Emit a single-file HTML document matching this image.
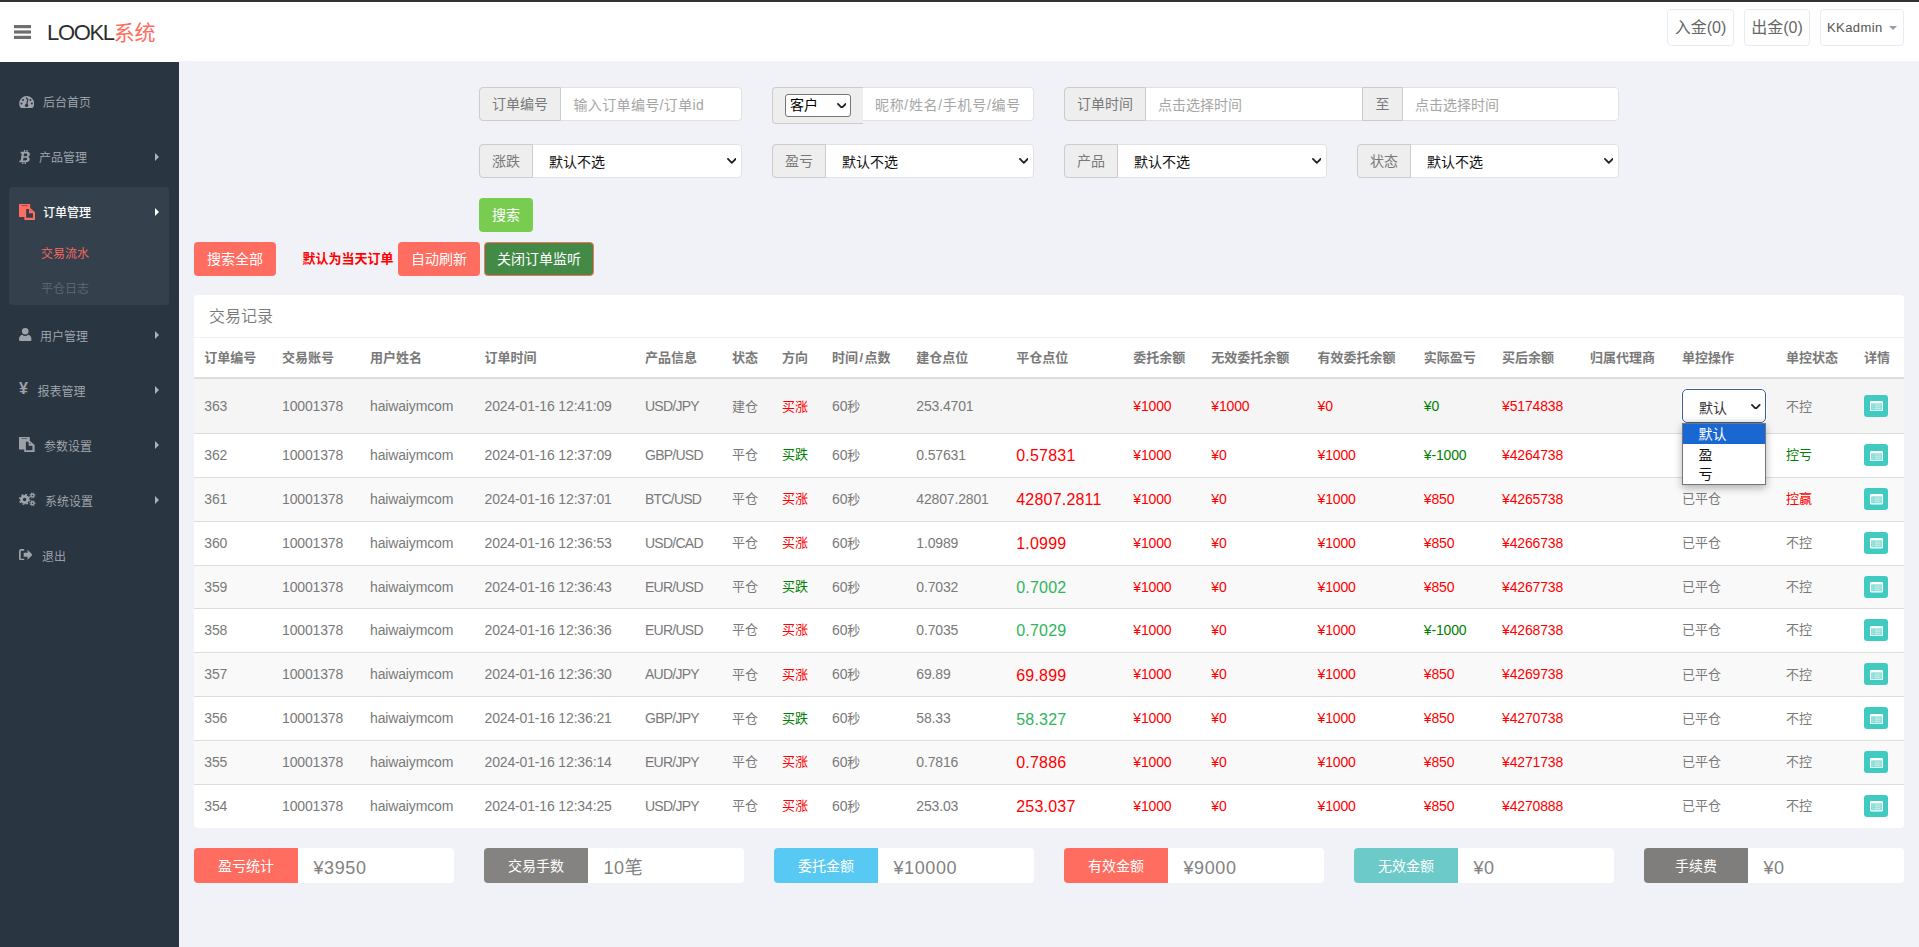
<!DOCTYPE html>
<html lang="zh-CN">
<head>
<meta charset="utf-8">
<title>LOOKL系统</title>
<style>
*{box-sizing:border-box;}
html,body{margin:0;padding:0;}
body{width:1919px;height:947px;overflow:hidden;position:relative;background:#f1f2f7;color:#797979;
 font-family:"Liberation Sans","Noto Sans CJK SC",sans-serif;font-size:13px;line-height:1.42857;}
.abs{position:absolute;}
/* header */
#topline{position:absolute;left:0;top:0;width:1919px;height:2px;background:#333;}
#header{position:absolute;left:0;top:2px;width:1919px;height:59px;background:#fff;}
#burger{position:absolute;left:14px;top:23.3px;width:17px;height:14px;}
#logo{position:absolute;left:47px;top:15.6px;font-size:22px;line-height:30px;color:#2e2e2e;white-space:nowrap;letter-spacing:-1.35px;}
#logo span{color:#ff6c60;letter-spacing:0;font-size:21px;}
.tbtn{position:absolute;top:9px;height:37px;border:1px solid #eaeaf4;border-radius:4px;background:#fff;color:#666;
 white-space:nowrap;text-align:center;}
/* sidebar */
#sidebar{position:absolute;left:0;top:61px;width:179px;height:886px;background:#2a3542;}
.nav{position:absolute;left:0;width:179px;height:20px;line-height:20px;font-size:12px;color:#a6abb1;font-weight:350;white-space:nowrap;}
.nav svg{position:absolute;}
.nav .t{position:absolute;top:1.1px;}
.nav .ar{position:absolute;left:155px;top:5.6px;width:0;height:0;border-left:4px solid #aeb2b7;border-top:4px solid transparent;border-bottom:4px solid transparent;}
#actblk{position:absolute;left:9px;top:126px;width:160px;height:118px;background:#35404d;border-radius:4px;}
/* form */
.ig{position:absolute;height:34px;border:1px solid #e2e2e4;border-radius:4px;background:#fff;}
.ig .ad{position:absolute;top:-1px;bottom:-1px;left:-1px;background:#eee;border:1px solid #ccc;border-radius:4px 0 0 4px;
 color:#797979;font-size:14px;line-height:32px;text-align:center;}
.ph{position:absolute;top:1.3px;line-height:33px;font-size:14px;color:#a6a6a6;white-space:nowrap;}
.sv{position:absolute;top:1px;line-height:33px;font-size:14px;color:#111;white-space:nowrap;}
.chev{position:absolute;width:9.6px;height:5.8px;}
.btn{position:absolute;height:34px;border-radius:4px;color:#fff;font-size:14px;line-height:34px;text-align:center;white-space:nowrap;}

/* table */
#panel{position:absolute;left:194px;top:295px;width:1710px;height:533px;background:#fff;border-radius:4px;}
#ptitle{position:absolute;left:15px;top:11.4px;font-size:16px;line-height:22.86px;color:#797979;font-weight:350;}
#phl{position:absolute;left:0;top:42px;width:1710px;height:1px;background:#eff2f7;}
.th{position:absolute;top:53.6px;height:18.6px;line-height:18.6px;font-weight:bold;color:#797979;white-space:nowrap;font-size:13px;}
#thl{position:absolute;left:0;top:81.6px;width:1710px;height:2px;background:#ddd;}
.row{position:absolute;left:0;width:1710px;border-top:1px solid #ddd;}
.row.odd{background:#f9f9f9;}
.row.hov{background:#f5f5f5;border-top:0;}
.c{position:absolute;top:10.7px;height:22.857px;line-height:22.857px;white-space:nowrap;font-size:14px;letter-spacing:-0.15px;}
.c .k,.c.k{font-size:13px;letter-spacing:0;}
.big{font-size:16px;letter-spacing:0.2px;}
.r{color:#f00;} .g{color:#008000;} .bg{color:#2db55d;} .br{color:#f00;}
.dbtn{position:absolute;left:1670px;width:24px;height:22px;border-radius:3px;background:#41cac0;}
.dbtn svg{position:absolute;left:5.5px;top:6.5px;}
.stat{position:absolute;top:848px;width:260px;height:35px;background:#fff;border-radius:4px;overflow:hidden;}
.stat .l{position:absolute;left:0;top:0;width:104px;height:35px;line-height:37px;color:#fff;font-size:14px;text-align:center;}
.stat .v{position:absolute;left:119.5px;top:0;line-height:40px;font-size:18px;color:#828282;white-space:nowrap;letter-spacing:0.6px;}
</style>
</head>
<body>
<div id="topline"></div>
<div id="header">
  <svg id="burger" viewBox="0 0 17 14"><rect x="0" y="0" width="17" height="3.2" fill="#6e6e6e"/><rect x="0" y="5.4" width="17" height="3.2" fill="#6e6e6e"/><rect x="0" y="10.8" width="17" height="3.2" fill="#6e6e6e"/></svg>
  <div id="logo">LOOKL<span>系统</span></div>
  <div class="tbtn" style="left:1667px;width:67px;top:7px;font-size:16px;line-height:35px;">入金(0)</div>
  <div class="tbtn" style="left:1744px;width:66px;top:7px;font-size:16px;line-height:35px;">出金(0)</div>
  <div class="tbtn" style="left:1820px;width:84px;top:7px;font-size:13px;line-height:35px;text-align:left;padding-left:6px;color:#555;letter-spacing:0.4px;">KKadmin<span style="position:absolute;left:68px;top:16px;width:0;height:0;border-top:4px solid #9a9aa8;border-left:4px solid transparent;border-right:4px solid transparent;"></span></div>
</div>

<div class="abs" style="left:0;top:61px;width:179px;height:1px;background:#fff;z-index:3;"></div>
<div id="sidebar">
  <div id="actblk"></div>

  <div class="nav" style="top:31px;">
    <svg style="left:19px;top:4px;" width="15.4" height="12" viewBox="0 0 15 12"><path d="M7.5,0 A7.5,7.5 0 0 1 15,7.5 C15,9 14.6,10.4 13.8,11.6 C13.7,11.85 13.4,12 13.1,12 L1.9,12 C1.6,12 1.3,11.85 1.2,11.6 C0.4,10.4 0,9 0,7.5 A7.5,7.5 0 0 1 7.5,0 Z" fill="#9ea3aa"/><g fill="#2a3542"><circle cx="2.3" cy="7.6" r="1"/><circle cx="3.8" cy="3.9" r="1"/><circle cx="11.2" cy="3.9" r="1"/><circle cx="12.7" cy="7.6" r="1"/><circle cx="7.4" cy="9.4" r="1.7"/><path d="M7.6,8.6 L8.6,3.2" stroke="#2a3542" stroke-width="1.2" stroke-linecap="round"/><circle cx="7.5" cy="2.3" r="0.9"/></g></svg>
    <span class="t" style="left:43px;">后台首页</span>
  </div>
  <div class="nav" style="top:86px;">
    <svg style="left:20px;top:3px;overflow:visible;" width="10" height="14" viewBox="0 0 10 14"><path transform="translate(1.0,0) skewX(-8)" fill="#9ea3aa" fill-rule="evenodd" d="M3,0 H4.3 V2 H3Z M5.5,0 H6.8 V2 H5.5Z M3,12 H4.3 V14 H3Z M5.5,12 H6.8 V14 H5.5Z M0,1.8 H6 C8.5,1.8 9.5,3.2 9.5,4.6 C9.5,5.8 8.9,6.5 8,6.9 C9.3,7.2 10,8.2 10,9.4 C10,11.2 8.6,12.2 6.3,12.2 H0 V10.6 H1.3 V3.4 H0 Z M3.5,3.6 V6.2 H5.4 C6.5,6.2 7.1,5.7 7.1,4.9 C7.1,4.1 6.5,3.6 5.4,3.6 Z M3.5,7.8 V10.4 H5.7 C6.9,10.4 7.5,9.9 7.5,9.1 C7.5,8.3 6.9,7.8 5.7,7.8 Z"/></svg>
    <span class="t" style="left:39px;">产品管理</span><i class="ar"></i>
  </div>
  <div class="nav" style="top:141px;color:#fff;">
    <svg style="left:19px;top:2px;" width="16.2" height="16" viewBox="0 0 16.2 16"><path fill="#ff6c60" fill-rule="evenodd" d="M0.5,0 H10.7 Q11.2,0 11.2,0.5 V3.9 L16.2,8.3 V15.4 Q16.2,16 15.6,16 H6 Q5.4,16 5.4,15.4 V13 H0.5 Q0,13 0,12.5 V0.5 Q0,0 0.5,0Z M7.15,5 H10 V9.2 H14 V13.75 H7.15Z"/><path d="M2.6,1.6 H8.6" stroke="#35404d" stroke-width="0.8" stroke-opacity="0.75"/><circle cx="11.6" cy="6.8" r="0.45" fill="#35404d"/></svg>
    <span class="t" style="left:43px;font-weight:500;">订单管理</span><i class="ar" style="border-left-color:#fff;"></i>
  </div>
  <div class="nav" style="top:181.5px;color:#ff6c60;"><span class="t" style="left:41px;">交易流水</span></div>
  <div class="nav" style="top:216.5px;color:#5f6b78;"><span class="t" style="left:41px;">平仓日志</span></div>
  <div class="nav" style="top:264.5px;">
    <svg style="left:19px;top:2px;" width="12.5" height="13" viewBox="0 0 12.5 13"><circle cx="6.25" cy="3.3" r="3.3" fill="#9ea3aa"/><path d="M0,11.5 C0,9 1.3,7 3.3,6.8 C4.1,7.6 5.2,8 6.25,8 C7.3,8 8.4,7.6 9.2,6.8 C11.2,7 12.5,9 12.5,11.5 C12.5,12.5 11.8,13 11,13 H1.5 C0.7,13 0,12.5 0,11.5Z" fill="#9ea3aa"/></svg>
    <span class="t" style="left:40px;">用户管理</span><i class="ar"></i>
  </div>
  <div class="nav" style="top:319.5px;">
    <span class="t" style="left:19px;top:-1.5px;font-size:16px;font-weight:bold;color:#9ea3aa;">¥</span>
    <span class="t" style="left:37.5px;">报表管理</span><i class="ar"></i>
  </div>
  <div class="nav" style="top:374.5px;">
    <svg style="left:19px;top:1.2px;" width="15.6" height="15.4" viewBox="0 0 16.2 16"><path fill="#9ea3aa" fill-rule="evenodd" d="M0.5,0 H10.7 Q11.2,0 11.2,0.5 V3.9 L16.2,8.3 V15.4 Q16.2,16 15.6,16 H6 Q5.4,16 5.4,15.4 V13 H0.5 Q0,13 0,12.5 V0.5 Q0,0 0.5,0Z M7.15,5 H10 V9.2 H14 V13.75 H7.15Z"/><path d="M2.6,1.6 H8.6" stroke="#2a3542" stroke-width="0.8" stroke-opacity="0.75"/><circle cx="11.6" cy="6.8" r="0.45" fill="#2a3542"/></svg>
    <span class="t" style="left:44px;">参数设置</span><i class="ar"></i>
  </div>
  <div class="nav" style="top:429.5px;">
    <svg style="left:19px;top:1.5px;" width="16.6" height="14.5" viewBox="0 0 16 14"><g fill="none" stroke="#9ea3aa"><circle cx="5.4" cy="7.2" r="3.0" stroke-width="2.6"/><circle cx="5.4" cy="7.2" r="4.7" stroke-width="1.5" stroke-dasharray="1.85 1.841"/><circle cx="13" cy="3.3" r="1.4" stroke-width="1.3"/><circle cx="13" cy="3.3" r="2.4" stroke-width="1" stroke-dasharray="0.95 0.935"/><circle cx="13" cy="10.8" r="1.4" stroke-width="1.3"/><circle cx="13" cy="10.8" r="2.4" stroke-width="1" stroke-dasharray="0.95 0.935"/></g></svg>
    <span class="t" style="left:45px;">系统设置</span><i class="ar"></i>
  </div>
  <div class="nav" style="top:484.5px;">
    <svg style="left:18.8px;top:3px;" width="13.6" height="11.5" viewBox="0 0 13 11"><path fill="#9ea3aa" d="M5,0 H2.2 Q0,0 0,2.2 V8.8 Q0,11 2.2,11 H5 V9.4 H2.4 Q1.6,9.4 1.6,8.6 V2.4 Q1.6,1.6 2.4,1.6 H5Z M4.5,3.6 H8.2 V0.8 L13,5.5 L8.2,10.2 V7.4 H4.5Z"/></svg>
    <span class="t" style="left:42px;">退出</span>
  </div>

</div>

<div class="ig" style="left:479px;top:87px;width:263px;"><div class="ad" style="width:82px;">订单编号</div><span class="ph" style="left:93.5px;letter-spacing:0.35px;">输入订单编号/订单id</span></div>
<div class="ig" style="left:863px;top:87px;width:171px;border-radius:0 4px 4px 0;border-left:0;"><span class="ph" style="left:12px;letter-spacing:0.68px;">昵称/姓名/手机号/编号</span></div>
<div class="abs" style="left:772px;top:87px;width:91px;height:37px;background:#eee;border:1px solid #ccc;border-right:0;border-radius:4px 0 0 4px;"><div class="abs" style="left:12px;top:6px;width:66px;height:23px;background:#fff;border:1px solid #767676;border-radius:3px;"><span class="abs" style="left:4px;top:0;line-height:21px;font-size:14px;color:#000;">客户</span><svg class="chev" style="left:50.5px;top:7.5px" viewBox="0 0 10 6"><path d="M1,1 L5,5 L9,1" fill="none" stroke="#222" stroke-width="1.9" stroke-linecap="round" stroke-linejoin="round"/></svg></div></div>
<div class="ig" style="left:1064px;top:87px;width:555px;"><div class="ad" style="width:82px;">订单时间</div><span class="ph" style="left:93px;">点击选择时间</span><div class="ad" style="left:297px;width:41px;border-radius:0;">至</div><span class="ph" style="left:350px;">点击选择时间</span></div>
<div class="ig" style="left:479px;top:144px;width:263px;"><div class="ad" style="width:54px;">涨跌</div><span class="sv" style="left:69px;">默认不选</span><svg class="chev" style="left:246.5px;top:13px" viewBox="0 0 10 6"><path d="M1,1 L5,5 L9,1" fill="none" stroke="#222" stroke-width="1.9" stroke-linecap="round" stroke-linejoin="round"/></svg></div>
<div class="ig" style="left:772px;top:144px;width:262px;"><div class="ad" style="width:54px;">盈亏</div><span class="sv" style="left:69px;">默认不选</span><svg class="chev" style="left:245.5px;top:13px" viewBox="0 0 10 6"><path d="M1,1 L5,5 L9,1" fill="none" stroke="#222" stroke-width="1.9" stroke-linecap="round" stroke-linejoin="round"/></svg></div>
<div class="ig" style="left:1064px;top:144px;width:263px;"><div class="ad" style="width:54px;">产品</div><span class="sv" style="left:69px;">默认不选</span><svg class="chev" style="left:246.5px;top:13px" viewBox="0 0 10 6"><path d="M1,1 L5,5 L9,1" fill="none" stroke="#222" stroke-width="1.9" stroke-linecap="round" stroke-linejoin="round"/></svg></div>
<div class="ig" style="left:1357px;top:144px;width:262px;"><div class="ad" style="width:54px;">状态</div><span class="sv" style="left:69px;">默认不选</span><svg class="chev" style="left:245.5px;top:13px" viewBox="0 0 10 6"><path d="M1,1 L5,5 L9,1" fill="none" stroke="#222" stroke-width="1.9" stroke-linecap="round" stroke-linejoin="round"/></svg></div>
<div class="btn" style="left:479px;top:198px;width:54px;background:#78cd51;">搜索</div>
<div class="btn" style="left:194px;top:242px;width:82px;background:#ff6c60;">搜索全部</div>
<div class="abs" style="left:302.5px;top:249px;line-height:20px;font-size:13px;font-weight:bold;color:#f00;white-space:nowrap;">默认为当天订单</div>
<div class="btn" style="left:398px;top:242px;width:82px;background:#ff6c60;">自动刷新</div>
<div class="btn" style="left:484px;top:242px;width:110px;background:#448a47;border:1px solid #ff6c60;line-height:32px;">关闭订单监听</div>


<div id="panel"><div id="ptitle">交易记录</div><div id="phl"></div>
<span class="th" style="left:10.25px;">订单编号</span><span class="th" style="left:88px;">交易账号</span><span class="th" style="left:176px;">用户姓名</span><span class="th" style="left:290.5px;">订单时间</span><span class="th" style="left:451px;">产品信息</span><span class="th" style="left:538px;">状态</span><span class="th" style="left:588px;">方向</span><span class="th" style="left:638px;">时间<span style="padding:0 1.4px;">/</span>点数</span><span class="th" style="left:722.25px;">建仓点位</span><span class="th" style="left:822.25px;">平仓点位</span><span class="th" style="left:939.25px;">委托余额</span><span class="th" style="left:1017.25px;">无效委托余额</span><span class="th" style="left:1123.5px;">有效委托余额</span><span class="th" style="left:1229.75px;">实际盈亏</span><span class="th" style="left:1308px;">买后余额</span><span class="th" style="left:1396px;">归属代理商</span><span class="th" style="left:1488px;">单控操作</span><span class="th" style="left:1592px;">单控状态</span><span class="th" style="left:1670px;">详情</span>
<div id="thl"></div>
<div class="row hov" style="top:83.6px;height:54px;"><span class="c " style="left:10.25px;top:16.8px;">363</span><span class="c " style="left:88px;top:16.8px;">10001378</span><span class="c " style="left:176px;top:16.8px;">haiwaiymcom</span><span class="c " style="left:290.5px;top:16.8px;">2024-01-16 12:41:09</span><span class="c " style="left:451px;top:16.8px;letter-spacing:-0.75px;">USD/JPY</span><span class="c k" style="left:538px;top:17.1px;">建仓</span><span class="c r k" style="left:588px;top:17.1px;">买涨</span><span class="c " style="left:638px;top:16.8px;">60<span class="k">秒</span></span><span class="c " style="left:722.25px;top:16.8px;">253.4701</span><span class="c r" style="left:939.25px;top:16.8px;">¥1000</span><span class="c r" style="left:1017.25px;top:16.8px;">¥1000</span><span class="c r" style="left:1123.5px;top:16.8px;">¥0</span><span class="c g" style="left:1229.75px;top:16.8px;">¥0</span><span class="c r" style="left:1308px;top:16.8px;">¥5174838</span><span class="c  k" style="left:1592px;top:17.1px;">不控</span><div class="dbtn" style="top:16px;"><svg width="13" height="10.4" viewBox="0 0 13 10.4"><rect x="0.6" y="0.6" width="11.8" height="9.2" rx="0.9" fill="rgba(255,255,255,0.28)" stroke="#fff" stroke-width="1.2"/><rect x="0.6" y="0.4" width="11.8" height="2" fill="#fff"/><path d="M2.2,4 H3.4 M4.4,4 H10.8 M2.2,5.9 H3.4 M4.4,5.9 H10.8 M2.2,7.8 H3.4 M4.4,7.8 H10.8" stroke="#fff" stroke-opacity="0.8" stroke-width="0.9"/></svg></div></div>
<div class="row" style="top:138.3px;height:43.857px;"><span class="c " style="left:10.25px;top:9.8px;">362</span><span class="c " style="left:88px;top:9.8px;">10001378</span><span class="c " style="left:176px;top:9.8px;">haiwaiymcom</span><span class="c " style="left:290.5px;top:9.8px;">2024-01-16 12:37:09</span><span class="c " style="left:451px;top:9.8px;letter-spacing:-0.75px;">GBP/USD</span><span class="c k" style="left:538px;top:10.1px;">平仓</span><span class="c g k" style="left:588px;top:10.1px;">买跌</span><span class="c " style="left:638px;top:9.8px;">60<span class="k">秒</span></span><span class="c " style="left:722.25px;top:9.8px;">0.57631</span><span class="c big br" style="left:822.25px;top:11.2px;">0.57831</span><span class="c r" style="left:939.25px;top:9.8px;">¥1000</span><span class="c r" style="left:1017.25px;top:9.8px;">¥0</span><span class="c r" style="left:1123.5px;top:9.8px;">¥1000</span><span class="c g" style="left:1229.75px;top:9.8px;">¥-1000</span><span class="c r" style="left:1308px;top:9.8px;">¥4264738</span><span class="c k" style="left:1488px;top:10.1px;">已平仓</span><span class="c g k" style="left:1592px;top:10.1px;">控亏</span><div class="dbtn" style="top:9.8285px;"><svg width="13" height="10.4" viewBox="0 0 13 10.4"><rect x="0.6" y="0.6" width="11.8" height="9.2" rx="0.9" fill="rgba(255,255,255,0.28)" stroke="#fff" stroke-width="1.2"/><rect x="0.6" y="0.4" width="11.8" height="2" fill="#fff"/><path d="M2.2,4 H3.4 M4.4,4 H10.8 M2.2,5.9 H3.4 M4.4,5.9 H10.8 M2.2,7.8 H3.4 M4.4,7.8 H10.8" stroke="#fff" stroke-opacity="0.8" stroke-width="0.9"/></svg></div></div>
<div class="row odd" style="top:182.157px;height:43.857px;"><span class="c " style="left:10.25px;top:9.8px;">361</span><span class="c " style="left:88px;top:9.8px;">10001378</span><span class="c " style="left:176px;top:9.8px;">haiwaiymcom</span><span class="c " style="left:290.5px;top:9.8px;">2024-01-16 12:37:01</span><span class="c " style="left:451px;top:9.8px;letter-spacing:-0.75px;">BTC/USD</span><span class="c k" style="left:538px;top:10.1px;">平仓</span><span class="c r k" style="left:588px;top:10.1px;">买涨</span><span class="c " style="left:638px;top:9.8px;">60<span class="k">秒</span></span><span class="c " style="left:722.25px;top:9.8px;">42807.2801</span><span class="c big br" style="left:822.25px;top:11.2px;">42807.2811</span><span class="c r" style="left:939.25px;top:9.8px;">¥1000</span><span class="c r" style="left:1017.25px;top:9.8px;">¥0</span><span class="c r" style="left:1123.5px;top:9.8px;">¥1000</span><span class="c r" style="left:1229.75px;top:9.8px;">¥850</span><span class="c r" style="left:1308px;top:9.8px;">¥4265738</span><span class="c k" style="left:1488px;top:10.1px;">已平仓</span><span class="c r k" style="left:1592px;top:10.1px;">控赢</span><div class="dbtn" style="top:9.8285px;"><svg width="13" height="10.4" viewBox="0 0 13 10.4"><rect x="0.6" y="0.6" width="11.8" height="9.2" rx="0.9" fill="rgba(255,255,255,0.28)" stroke="#fff" stroke-width="1.2"/><rect x="0.6" y="0.4" width="11.8" height="2" fill="#fff"/><path d="M2.2,4 H3.4 M4.4,4 H10.8 M2.2,5.9 H3.4 M4.4,5.9 H10.8 M2.2,7.8 H3.4 M4.4,7.8 H10.8" stroke="#fff" stroke-opacity="0.8" stroke-width="0.9"/></svg></div></div>
<div class="row" style="top:226.014px;height:43.857px;"><span class="c " style="left:10.25px;top:9.8px;">360</span><span class="c " style="left:88px;top:9.8px;">10001378</span><span class="c " style="left:176px;top:9.8px;">haiwaiymcom</span><span class="c " style="left:290.5px;top:9.8px;">2024-01-16 12:36:53</span><span class="c " style="left:451px;top:9.8px;letter-spacing:-0.75px;">USD/CAD</span><span class="c k" style="left:538px;top:10.1px;">平仓</span><span class="c r k" style="left:588px;top:10.1px;">买涨</span><span class="c " style="left:638px;top:9.8px;">60<span class="k">秒</span></span><span class="c " style="left:722.25px;top:9.8px;">1.0989</span><span class="c big br" style="left:822.25px;top:11.2px;">1.0999</span><span class="c r" style="left:939.25px;top:9.8px;">¥1000</span><span class="c r" style="left:1017.25px;top:9.8px;">¥0</span><span class="c r" style="left:1123.5px;top:9.8px;">¥1000</span><span class="c r" style="left:1229.75px;top:9.8px;">¥850</span><span class="c r" style="left:1308px;top:9.8px;">¥4266738</span><span class="c k" style="left:1488px;top:10.1px;">已平仓</span><span class="c  k" style="left:1592px;top:10.1px;">不控</span><div class="dbtn" style="top:9.8285px;"><svg width="13" height="10.4" viewBox="0 0 13 10.4"><rect x="0.6" y="0.6" width="11.8" height="9.2" rx="0.9" fill="rgba(255,255,255,0.28)" stroke="#fff" stroke-width="1.2"/><rect x="0.6" y="0.4" width="11.8" height="2" fill="#fff"/><path d="M2.2,4 H3.4 M4.4,4 H10.8 M2.2,5.9 H3.4 M4.4,5.9 H10.8 M2.2,7.8 H3.4 M4.4,7.8 H10.8" stroke="#fff" stroke-opacity="0.8" stroke-width="0.9"/></svg></div></div>
<div class="row odd" style="top:269.871px;height:43.857px;"><span class="c " style="left:10.25px;top:9.8px;">359</span><span class="c " style="left:88px;top:9.8px;">10001378</span><span class="c " style="left:176px;top:9.8px;">haiwaiymcom</span><span class="c " style="left:290.5px;top:9.8px;">2024-01-16 12:36:43</span><span class="c " style="left:451px;top:9.8px;letter-spacing:-0.75px;">EUR/USD</span><span class="c k" style="left:538px;top:10.1px;">平仓</span><span class="c g k" style="left:588px;top:10.1px;">买跌</span><span class="c " style="left:638px;top:9.8px;">60<span class="k">秒</span></span><span class="c " style="left:722.25px;top:9.8px;">0.7032</span><span class="c big bg" style="left:822.25px;top:11.2px;">0.7002</span><span class="c r" style="left:939.25px;top:9.8px;">¥1000</span><span class="c r" style="left:1017.25px;top:9.8px;">¥0</span><span class="c r" style="left:1123.5px;top:9.8px;">¥1000</span><span class="c r" style="left:1229.75px;top:9.8px;">¥850</span><span class="c r" style="left:1308px;top:9.8px;">¥4267738</span><span class="c k" style="left:1488px;top:10.1px;">已平仓</span><span class="c  k" style="left:1592px;top:10.1px;">不控</span><div class="dbtn" style="top:9.8285px;"><svg width="13" height="10.4" viewBox="0 0 13 10.4"><rect x="0.6" y="0.6" width="11.8" height="9.2" rx="0.9" fill="rgba(255,255,255,0.28)" stroke="#fff" stroke-width="1.2"/><rect x="0.6" y="0.4" width="11.8" height="2" fill="#fff"/><path d="M2.2,4 H3.4 M4.4,4 H10.8 M2.2,5.9 H3.4 M4.4,5.9 H10.8 M2.2,7.8 H3.4 M4.4,7.8 H10.8" stroke="#fff" stroke-opacity="0.8" stroke-width="0.9"/></svg></div></div>
<div class="row" style="top:313.128px;height:44.057px;"><span class="c " style="left:10.25px;top:9.4px;">358</span><span class="c " style="left:88px;top:9.4px;">10001378</span><span class="c " style="left:176px;top:9.4px;">haiwaiymcom</span><span class="c " style="left:290.5px;top:9.4px;">2024-01-16 12:36:36</span><span class="c " style="left:451px;top:9.4px;letter-spacing:-0.75px;">EUR/USD</span><span class="c k" style="left:538px;top:9.7px;">平仓</span><span class="c r k" style="left:588px;top:9.7px;">买涨</span><span class="c " style="left:638px;top:9.4px;">60<span class="k">秒</span></span><span class="c " style="left:722.25px;top:9.4px;">0.7035</span><span class="c big bg" style="left:822.25px;top:10.8px;">0.7029</span><span class="c r" style="left:939.25px;top:9.4px;">¥1000</span><span class="c r" style="left:1017.25px;top:9.4px;">¥0</span><span class="c r" style="left:1123.5px;top:9.4px;">¥1000</span><span class="c g" style="left:1229.75px;top:9.4px;">¥-1000</span><span class="c r" style="left:1308px;top:9.4px;">¥4268738</span><span class="c k" style="left:1488px;top:9.7px;">已平仓</span><span class="c  k" style="left:1592px;top:9.7px;">不控</span><div class="dbtn" style="top:9.9285px;"><svg width="13" height="10.4" viewBox="0 0 13 10.4"><rect x="0.6" y="0.6" width="11.8" height="9.2" rx="0.9" fill="rgba(255,255,255,0.28)" stroke="#fff" stroke-width="1.2"/><rect x="0.6" y="0.4" width="11.8" height="2" fill="#fff"/><path d="M2.2,4 H3.4 M4.4,4 H10.8 M2.2,5.9 H3.4 M4.4,5.9 H10.8 M2.2,7.8 H3.4 M4.4,7.8 H10.8" stroke="#fff" stroke-opacity="0.8" stroke-width="0.9"/></svg></div></div>
<div class="row odd" style="top:357.185px;height:44.257px;"><span class="c " style="left:10.25px;top:10.2px;">357</span><span class="c " style="left:88px;top:10.2px;">10001378</span><span class="c " style="left:176px;top:10.2px;">haiwaiymcom</span><span class="c " style="left:290.5px;top:10.2px;">2024-01-16 12:36:30</span><span class="c " style="left:451px;top:10.2px;letter-spacing:-0.75px;">AUD/JPY</span><span class="c k" style="left:538px;top:10.5px;">平仓</span><span class="c r k" style="left:588px;top:10.5px;">买涨</span><span class="c " style="left:638px;top:10.2px;">60<span class="k">秒</span></span><span class="c " style="left:722.25px;top:10.2px;">69.89</span><span class="c big br" style="left:822.25px;top:11.6px;">69.899</span><span class="c r" style="left:939.25px;top:10.2px;">¥1000</span><span class="c r" style="left:1017.25px;top:10.2px;">¥0</span><span class="c r" style="left:1123.5px;top:10.2px;">¥1000</span><span class="c r" style="left:1229.75px;top:10.2px;">¥850</span><span class="c r" style="left:1308px;top:10.2px;">¥4269738</span><span class="c k" style="left:1488px;top:10.5px;">已平仓</span><span class="c  k" style="left:1592px;top:10.5px;">不控</span><div class="dbtn" style="top:10.0285px;"><svg width="13" height="10.4" viewBox="0 0 13 10.4"><rect x="0.6" y="0.6" width="11.8" height="9.2" rx="0.9" fill="rgba(255,255,255,0.28)" stroke="#fff" stroke-width="1.2"/><rect x="0.6" y="0.4" width="11.8" height="2" fill="#fff"/><path d="M2.2,4 H3.4 M4.4,4 H10.8 M2.2,5.9 H3.4 M4.4,5.9 H10.8 M2.2,7.8 H3.4 M4.4,7.8 H10.8" stroke="#fff" stroke-opacity="0.8" stroke-width="0.9"/></svg></div></div>
<div class="row" style="top:401.442px;height:43.857px;"><span class="c " style="left:10.25px;top:9.8px;">356</span><span class="c " style="left:88px;top:9.8px;">10001378</span><span class="c " style="left:176px;top:9.8px;">haiwaiymcom</span><span class="c " style="left:290.5px;top:9.8px;">2024-01-16 12:36:21</span><span class="c " style="left:451px;top:9.8px;letter-spacing:-0.75px;">GBP/JPY</span><span class="c k" style="left:538px;top:10.1px;">平仓</span><span class="c g k" style="left:588px;top:10.1px;">买跌</span><span class="c " style="left:638px;top:9.8px;">60<span class="k">秒</span></span><span class="c " style="left:722.25px;top:9.8px;">58.33</span><span class="c big bg" style="left:822.25px;top:11.2px;">58.327</span><span class="c r" style="left:939.25px;top:9.8px;">¥1000</span><span class="c r" style="left:1017.25px;top:9.8px;">¥0</span><span class="c r" style="left:1123.5px;top:9.8px;">¥1000</span><span class="c r" style="left:1229.75px;top:9.8px;">¥850</span><span class="c r" style="left:1308px;top:9.8px;">¥4270738</span><span class="c k" style="left:1488px;top:10.1px;">已平仓</span><span class="c  k" style="left:1592px;top:10.1px;">不控</span><div class="dbtn" style="top:9.8285px;"><svg width="13" height="10.4" viewBox="0 0 13 10.4"><rect x="0.6" y="0.6" width="11.8" height="9.2" rx="0.9" fill="rgba(255,255,255,0.28)" stroke="#fff" stroke-width="1.2"/><rect x="0.6" y="0.4" width="11.8" height="2" fill="#fff"/><path d="M2.2,4 H3.4 M4.4,4 H10.8 M2.2,5.9 H3.4 M4.4,5.9 H10.8 M2.2,7.8 H3.4 M4.4,7.8 H10.8" stroke="#fff" stroke-opacity="0.8" stroke-width="0.9"/></svg></div></div>
<div class="row odd" style="top:445.299px;height:43.857px;"><span class="c " style="left:10.25px;top:9.8px;">355</span><span class="c " style="left:88px;top:9.8px;">10001378</span><span class="c " style="left:176px;top:9.8px;">haiwaiymcom</span><span class="c " style="left:290.5px;top:9.8px;">2024-01-16 12:36:14</span><span class="c " style="left:451px;top:9.8px;letter-spacing:-0.75px;">EUR/JPY</span><span class="c k" style="left:538px;top:10.1px;">平仓</span><span class="c r k" style="left:588px;top:10.1px;">买涨</span><span class="c " style="left:638px;top:9.8px;">60<span class="k">秒</span></span><span class="c " style="left:722.25px;top:9.8px;">0.7816</span><span class="c big br" style="left:822.25px;top:11.2px;">0.7886</span><span class="c r" style="left:939.25px;top:9.8px;">¥1000</span><span class="c r" style="left:1017.25px;top:9.8px;">¥0</span><span class="c r" style="left:1123.5px;top:9.8px;">¥1000</span><span class="c r" style="left:1229.75px;top:9.8px;">¥850</span><span class="c r" style="left:1308px;top:9.8px;">¥4271738</span><span class="c k" style="left:1488px;top:10.1px;">已平仓</span><span class="c  k" style="left:1592px;top:10.1px;">不控</span><div class="dbtn" style="top:9.8285px;"><svg width="13" height="10.4" viewBox="0 0 13 10.4"><rect x="0.6" y="0.6" width="11.8" height="9.2" rx="0.9" fill="rgba(255,255,255,0.28)" stroke="#fff" stroke-width="1.2"/><rect x="0.6" y="0.4" width="11.8" height="2" fill="#fff"/><path d="M2.2,4 H3.4 M4.4,4 H10.8 M2.2,5.9 H3.4 M4.4,5.9 H10.8 M2.2,7.8 H3.4 M4.4,7.8 H10.8" stroke="#fff" stroke-opacity="0.8" stroke-width="0.9"/></svg></div></div>
<div class="row" style="top:489.156px;height:43.857px;"><span class="c " style="left:10.25px;top:9.8px;">354</span><span class="c " style="left:88px;top:9.8px;">10001378</span><span class="c " style="left:176px;top:9.8px;">haiwaiymcom</span><span class="c " style="left:290.5px;top:9.8px;">2024-01-16 12:34:25</span><span class="c " style="left:451px;top:9.8px;letter-spacing:-0.75px;">USD/JPY</span><span class="c k" style="left:538px;top:10.1px;">平仓</span><span class="c r k" style="left:588px;top:10.1px;">买涨</span><span class="c " style="left:638px;top:9.8px;">60<span class="k">秒</span></span><span class="c " style="left:722.25px;top:9.8px;">253.03</span><span class="c big br" style="left:822.25px;top:11.2px;">253.037</span><span class="c r" style="left:939.25px;top:9.8px;">¥1000</span><span class="c r" style="left:1017.25px;top:9.8px;">¥0</span><span class="c r" style="left:1123.5px;top:9.8px;">¥1000</span><span class="c r" style="left:1229.75px;top:9.8px;">¥850</span><span class="c r" style="left:1308px;top:9.8px;">¥4270888</span><span class="c k" style="left:1488px;top:10.1px;">已平仓</span><span class="c  k" style="left:1592px;top:10.1px;">不控</span><div class="dbtn" style="top:9.8285px;"><svg width="13" height="10.4" viewBox="0 0 13 10.4"><rect x="0.6" y="0.6" width="11.8" height="9.2" rx="0.9" fill="rgba(255,255,255,0.28)" stroke="#fff" stroke-width="1.2"/><rect x="0.6" y="0.4" width="11.8" height="2" fill="#fff"/><path d="M2.2,4 H3.4 M4.4,4 H10.8 M2.2,5.9 H3.4 M4.4,5.9 H10.8 M2.2,7.8 H3.4 M4.4,7.8 H10.8" stroke="#fff" stroke-opacity="0.8" stroke-width="0.9"/></svg></div></div>
<div class="abs" style="left:1488px;top:94px;width:84px;height:34px;background:#fff;border:1px solid #3e5f96;border-radius:5px;box-shadow:0 0 0 1px rgba(255,255,255,0.85), inset 0 -6px 6px -4px rgba(0,0,0,0.07);"><span class="abs" style="left:16px;top:2.8px;line-height:31px;font-size:14px;color:#333;">默认</span><svg class="chev" style="left:68px;top:13.7px" viewBox="0 0 10 6"><path d="M1,1 L5,5 L9,1" fill="none" stroke="#222" stroke-width="1.9" stroke-linecap="round" stroke-linejoin="round"/></svg></div>
<div class="abs" style="left:1488px;top:128.3px;width:84px;height:61.5px;background:#fff;border:1px solid #767676;box-shadow:0 3px 8px rgba(0,0,0,0.3);font-size:14px;color:#111;"><div class="abs" style="left:0;top:0;width:82px;height:20px;background:#1967d2;color:#fff;line-height:20px;padding-left:15.5px;">默认</div><div class="abs" style="left:15.5px;top:20.6px;line-height:20px;">盈</div><div class="abs" style="left:15.5px;top:39.5px;line-height:20px;">亏</div></div>
</div>


<div class="stat" style="left:194px;"><div class="l" style="background:#ff6c60;">盈亏统计</div><div class="v">¥3950</div></div>
<div class="stat" style="left:484px;"><div class="l" style="background:#848382;">交易手数</div><div class="v">10笔</div></div>
<div class="stat" style="left:774px;"><div class="l" style="background:#58c9f3;">委托金额</div><div class="v">¥10000</div></div>
<div class="stat" style="left:1064px;"><div class="l" style="background:#ff6c60;">有效金额</div><div class="v">¥9000</div></div>
<div class="stat" style="left:1354px;"><div class="l" style="background:#6ccac9;">无效金额</div><div class="v">¥0</div></div>
<div class="stat" style="left:1644px;"><div class="l" style="background:#7f7e7d;">手续费</div><div class="v">¥0</div></div>

</body>
</html>
